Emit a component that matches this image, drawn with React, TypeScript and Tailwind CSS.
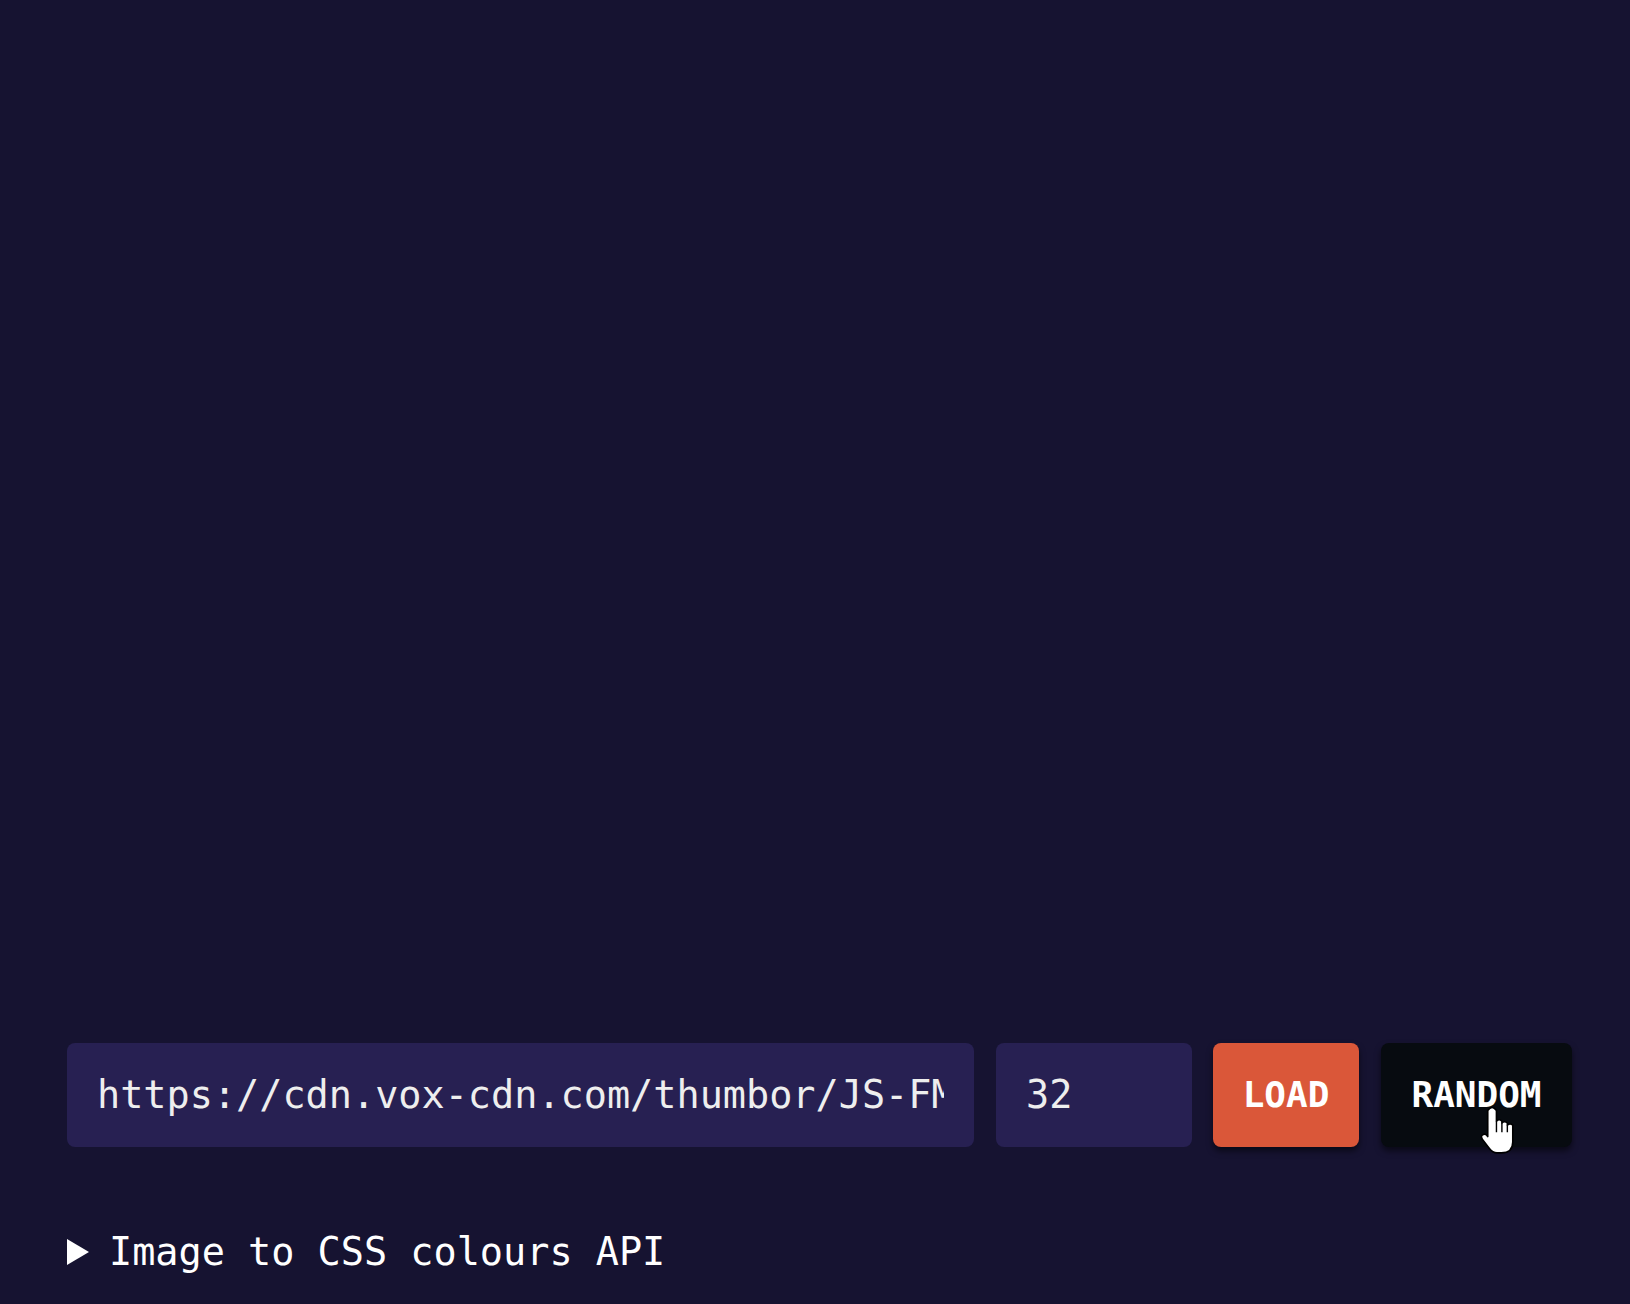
import { useState } from "react";

const mono = "font-['DejaVu_Sans_Mono','Liberation_Mono',monospace]";

function HandCursor() {
  return (
    <svg
      className="pointer-events-none absolute left-[98px] top-[62px]"
      width="36"
      height="49"
      viewBox="-1 -1 32 45"
    >
      <path
        d="M6.5 4 Q10.5 -1.5 14.5 4 L14.5 14 Q17 11 19.5 14 L19.5 15.5 Q22 13 24.5 15.5 L24.5 17.5 Q27 15 29.5 17.5 L29.5 33 Q29.5 43 19 43 L15 43 Q11 43 8 39 L1.5 30.5 Q-0.5 27 2.5 26 Q5 25 6.5 28 Z"
        fill="#ffffff"
        stroke="#000000"
        strokeWidth="1.5"
        strokeLinejoin="round"
      />
      <path d="M14.5 14 L14.5 24 M19.5 15.5 L19.5 24 M24.5 17.5 L24.5 24" stroke="#000000" strokeWidth="1.3" />
    </svg>
  );
}

export default function App() {
  const [url, setUrl] = useState(
    "https://cdn.vox-cdn.com/thumbor/JS-FMxYb3Qp0Lq9nH2rT6kV1wZc=/0x0:1920x1080/1200x800/filters:focal(960x540:961x541)/cdn.vox-cdn.com/uploads/chorus_image/image/73012345/image.jpg"
  );
  const [count, setCount] = useState("32");

  return (
    <div className="flex min-h-screen flex-col bg-[#161331] text-[#eeeeee]">
      <div className="flex-1" />

      <form
        className="mx-[67px] mr-[58px] flex h-[104px] gap-[22px]"
        onSubmit={(e) => e.preventDefault()}
      >
        <input
          value={url}
          onChange={(e) => setUrl(e.target.value)}
          className={`${mono} min-w-0 flex-1 rounded-[8px] bg-[#272052] pl-[30px] pr-[30px] text-[38.5px] text-[#eeeeee] outline-none`}
        />
        <input
          value={count}
          onChange={(e) => setCount(e.target.value)}
          className={`${mono} w-[196px] rounded-[8px] bg-[#272052] px-[30px] text-[38.5px] text-[#eeeeee] outline-none`}
        />
        <button
          type="submit"
          className={`${mono} ml-[-1px] w-[146px] rounded-[8px] bg-[#da5739] text-[36px] font-bold text-white shadow-[0_4px_6px_rgba(0,0,0,0.55)]`}
        >
          LOAD
        </button>
        <button
          type="button"
          className={`${mono} relative w-[191px] rounded-[8px] bg-[#070b10] text-[36px] font-bold text-white shadow-[0_4px_6px_rgba(0,0,0,0.55)]`}
        >
          RANDOM
          <HandCursor />
        </button>
      </form>

      <details className="mx-[67px] mt-[76px] mb-[23px]">
        <summary
          className={`${mono} flex list-none items-center gap-[20px] text-[38.5px] text-white [&::-webkit-details-marker]:hidden`}
        >
          <svg width="22" height="26" viewBox="0 0 22 26">
            <path d="M0 0 L22 13 L0 26 Z" fill="#ffffff" />
          </svg>
          <span>Image to CSS colours API</span>
        </summary>
      </details>
    </div>
  );
}
